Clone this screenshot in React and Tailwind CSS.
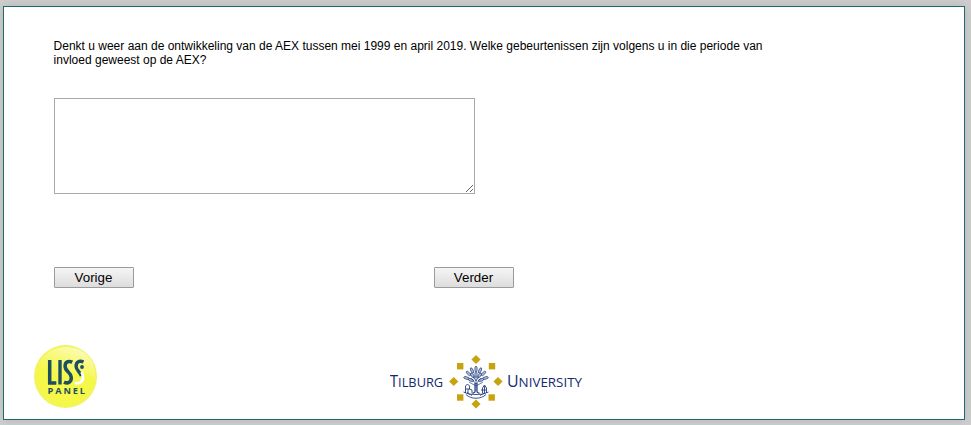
const LissLogo = () => (
  <svg width="64" height="64" viewBox="0 0 64 64" role="img" aria-label="LISS Panel">
    <defs>
      <radialGradient id="ball" cx="0.5" cy="0.5" r="0.5">
        <stop offset="0" stopColor="#f6f84e" />
        <stop offset="0.9" stopColor="#f5f748" />
        <stop offset="1" stopColor="#f0f266" />
      </radialGradient>
      <linearGradient id="gloss" x1="0.9" y1="0" x2="0.35" y2="0.9">
        <stop offset="0" stopColor="#fff" stopOpacity="0.7" />
        <stop offset="0.6" stopColor="#fff" stopOpacity="0.2" />
        <stop offset="1" stopColor="#fff" stopOpacity="0" />
      </linearGradient>
    </defs>
    <circle cx="31.500" cy="31.500" r="31.500" fill="url(#ball)" />
    <path d="M9 12C18 1 39-2 52 9c8 7 10 16 9 26-8-12-32-8-52-1C1 27 3 19 9 12z" fill="url(#gloss)" />
    <g fill="none" stroke="#1d4f60">
      <path d="M15.700 15v22.900h6.600" strokeWidth="3.500" />
      <path d="M26 15v24.500" strokeWidth="3.400" />
      <path d="M38.300 17.200c-4-1.800-7.200-.4-7.200 4 0 5.800 6.200 5.800 6.200 11.300 0 5-3.600 6.400-7.300 4.600" strokeWidth="3.500" />
      <path d="M49.500 17c-4.400-2-7.600.3-7.400 4.500.2 4 3.900 5 5.300 9.500" strokeWidth="3.400" />
    </g>
    <path d="M40.700 38c5 1.300 8.500-1.500 8.300-6-.1-2-.6-3.500-1.500-5" fill="none" stroke="#fff" strokeWidth="2.800" />
    <circle cx="48" cy="22" r="1.900" fill="#1d4f60" />
    <text x="13.500" y="48.500" fontFamily="'Open Sans', 'Noto Sans', sans-serif" fontWeight="700" fontSize="9.200" textLength="37.500" fill="#1d4f60">PANEL</text>
  </svg>
);

const diamonds = [[86, 8.500], [63.700, 30.500], [108, 30.500], [86, 53]];
const squares = [[70.200, 15.200], [102, 15.200], [70.200, 46.500], [101.700, 46.500]];

const leaves = [
  [86, 18, 0], [82, 19.500, -25], [90, 19.500, 25], [78.500, 22.500, -45], [93.500, 22.500, 45],
  [82.500, 24.500, -35], [89.500, 24.500, 35], [76.500, 27, -75], [95.500, 27, 75],
  [86, 23.500, 0], [81, 29, -70], [91, 29, 70],
];

const TilburgLogo = () => (
  <svg width="194" height="60" viewBox="0 0 194 60" role="img" aria-label="Tilburg University">
    <g fill="#c9a20f">
      {diamonds.map(([x, y]) => (
        <path key={`${x}-${y}`} d={`M${x} ${y - 4.600}l4.600 4.600-4.600 4.600-4.600-4.600z`} />
      ))}
      {squares.map(([x, y]) => (
        <rect key={`${x}-${y}`} x={x - 3.200} y={y - 3.200} width="6.400" height="6.400" />
      ))}
    </g>
    <g stroke="#26407f" fill="none" strokeWidth="0.700">
      {leaves.map(([x, y, a]) => (
        <ellipse key={`${x}-${y}`} cx={x} cy={y} rx="1.200" ry="2.900" fill="#b4bfd8" transform={`rotate(${a} ${x} ${y})`} />
      ))}
      <path d="M86 26v14M86 33l-5-6M86 33l5-6M86 30l-3-5M86 30l3-5M86 35l-7-4M86 35l7-4" />
      <path d="M85 32v9l-2.500 1.500M87 32v9l2.500 1.500" strokeWidth="1.200" />
      <path d="M75.500 42v-7l2-2 2 2v3l2.500 1v3M76 38h4M78 38v4M96.500 42v-5l-2-3-2 3v5M91 39h5M94.500 35v7" strokeWidth="0.900" />
      <path d="M73.500 41q5 3 12.500 2.500 7.500.5 12.500-2.500M76 43.500c5 5 15 5 20 0M77 41.500l5 3M95 41.500l-5 3" strokeWidth="0.900" />
    </g>
    <g fill="#142a6e" fontFamily="'Open Sans', 'Noto Sans', sans-serif">
      <text x="-0.300" y="36" fontSize="15.500" textLength="53.500" lengthAdjust="spacingAndGlyphs">T<tspan fontSize="13">ILBURG</tspan></text>
      <text x="117" y="36" fontSize="15.500" textLength="75" lengthAdjust="spacingAndGlyphs">U<tspan fontSize="13">NIVERSITY</tspan></text>
    </g>
  </svg>
);

const NavButton = ({ children }) => (
  <button
    type="button"
    className="h-[21px] w-20 rounded-[1px] border border-[#9b9b9b] bg-linear-to-b from-[#f5f5f5] to-[#dddddd] pr-px text-[13.33px] leading-[19px] text-black"
  >
    {children}
  </button>
);

export default function App() {
  return (
    <div className="h-[425px] w-full overflow-hidden bg-[#cecece] pt-1.5 pl-[3px] font-['Liberation_Sans',Arial,sans-serif] text-black">
      <main className="flex h-[414px] w-[962px] flex-col border border-[#1d6a6c] bg-white shadow-[0_0_10px_rgba(0,0,0,0.12)]">
        <p className="mt-8 ml-[49.6px] w-[720px] text-xs leading-[14px]">
          Denkt u weer aan de ontwikkeling van de AEX tussen mei 1999 en april 2019. Welke gebeurtenissen zijn volgens u in die periode van invloed geweest op de AEX?
        </p>
        <textarea
          aria-label="Antwoord"
          className="mt-[31px] ml-[50px] block h-24 w-[421px] shrink-0 resize border border-[#a9a9a9] bg-white p-0.5"
        />
        <div className="mt-[73px] ml-[50px] flex gap-[300px]">
          <NavButton>Vorige</NavButton>
          <NavButton>Verder</NavButton>
        </div>
        <footer className="mt-[57px] ml-[30px] flex items-start">
          <LissLogo />
          <div className="mt-1.5 ml-[292px]">
            <TilburgLogo />
          </div>
        </footer>
      </main>
    </div>
  );
}
